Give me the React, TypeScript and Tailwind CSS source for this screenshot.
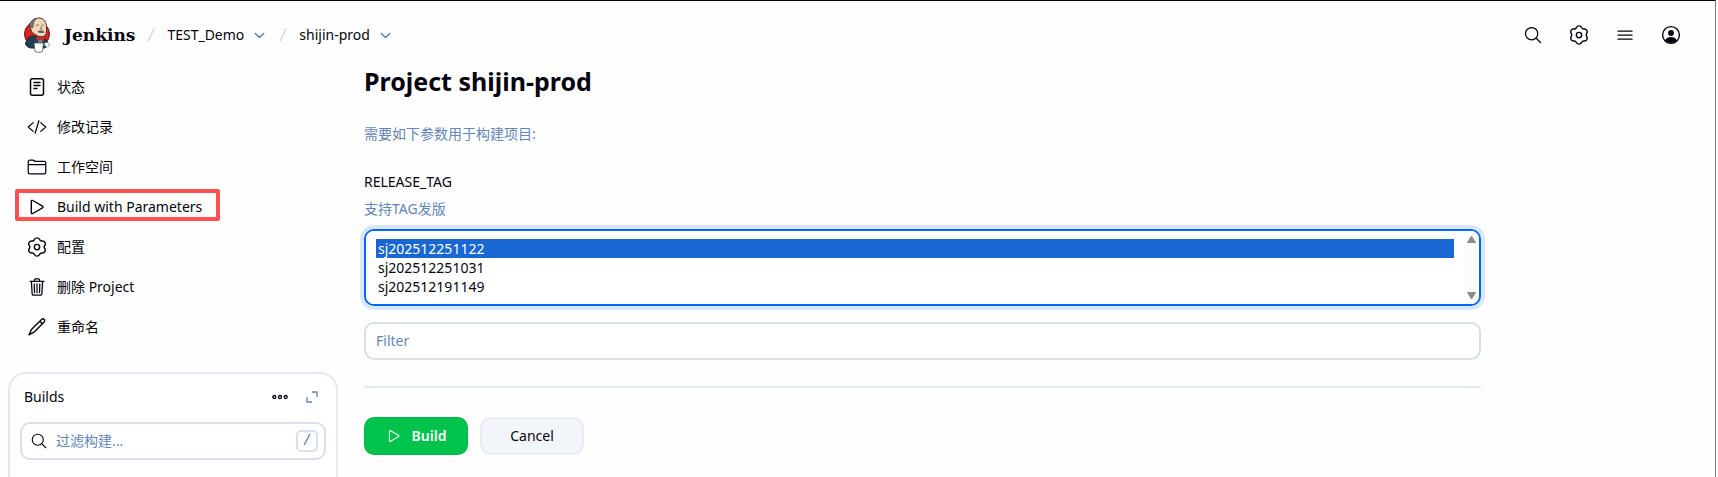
import type { ReactNode } from 'react'
import {
  IoChevronDownOutline,
  IoCodeSlashOutline,
  IoFolderOutline,
  IoSearchOutline,
  IoTrashOutline,
} from 'react-icons/io5'

interface NavItem {
  label: string
  icon: ReactNode
  marked?: boolean
}

function JenkinsLogo() {
  return (
    <svg width="26" height="36" viewBox="0 0 26 36" aria-hidden="true">
      <ellipse cx="13" cy="17" rx="12.5" ry="12.5" fill="#d8231f" stroke="#6b1c1a" />
      {/* suit */}
      <path d="M1.500 27c1-5 4-8 8-8l9 1c3 1 5 4 5.500 8l-3 3H9c-3 .5-6.500-1-7.500-4z" fill="#1f4050" stroke="#14242d" />
      {/* head */}
      <path d="M6 8c1-5 5-7 9-7 5.500 0 7.500 5 7.500 9 0 3 .5 6-1.500 8.500-2 2-6 1.500-9-.5-3-2-5-3-5-5.500-1-1.500-1-3-1-4.500z" fill="#f0d6b7" stroke="#4a3d38" />
      <path d="M5.500 8c1-4 4-6 7-6.500-2 1.500-3 3.500-3 6l-1 3.500c-2-.5-3-1.500-3-3z" fill="#77777b" stroke="#3b3b3b" strokeWidth=".6" />
      <path d="M12 8.500l2.500-.8M17.500 8l2 .3M17 9.500v3l1 .5" stroke="#4a3d38" strokeWidth=".8" fill="none" />
      <path d="M13.500 15c1-1.500 3-1.800 4-1 1.500-.5 2.500.2 3 1.500-2 .8-5 .8-7-.5z" fill="#5f5b5d" />
      {/* shirt and tie */}
      <path d="M14 21l5 .5-1 5-4-1z" fill="#6d8791" />
      <path d="M12.500 19l4 1.500 4-1.500.3 4.500-4.300-1.200-4 1.200z" fill="#e02a26" stroke="#81201d" strokeWidth=".6" />
      {/* napkin and cup */}
      <path d="M20 27c1-2 4-2 5 0s-1 3-3 3z" fill="#fff" stroke="#666" strokeWidth=".7" />
      <path d="M10 26h9.500l-1 8.500c-2 1.200-5.500 1.200-7.500 0z" fill="#fff" stroke="#555" strokeWidth=".8" />
    </svg>
  )
}

function GearIcon() {
  return (
    <svg width="20" height="20" viewBox="0 0 24 24" fill="none" stroke="currentColor" strokeWidth="1.700" strokeLinejoin="round">
      <path d="M8.900 3.100A3.400 3.400 0 0 1 15.100 3.100A3.100 3.100 0 0 0 18.160 4.870A3.400 3.400 0 0 1 21.260 10.230A3.100 3.100 0 0 0 21.260 13.770A3.400 3.400 0 0 1 18.160 19.130A3.100 3.100 0 0 0 15.100 20.900A3.400 3.400 0 0 1 8.900 20.900A3.100 3.100 0 0 0 5.840 19.130A3.400 3.400 0 0 1 2.740 13.770A3.100 3.100 0 0 0 2.740 10.230A3.400 3.400 0 0 1 5.840 4.870A3.100 3.100 0 0 0 8.900 3.100Z" />
      <circle cx="12" cy="12" r="3.200" />
    </svg>
  )
}

function StatusIcon() {
  return (
    <svg width="20" height="20" viewBox="0 0 20 20" fill="none" stroke="currentColor" strokeWidth="1.500" strokeLinecap="round">
      <rect x="3.500" y="1.700" width="13" height="16.600" rx="2" />
      <path d="M7 5.500h6M7 8.500h6M7 11.500h3" />
    </svg>
  )
}

function PlayIcon({ size = 20 }: { size?: number }) {
  return (
    <svg width={size} height={size} viewBox="0 0 20 20" fill="none" stroke="currentColor" strokeWidth="1.400" strokeLinejoin="round">
      <path d="M4.300 4.300v11.400c0 .8.8 1.200 1.500.8l9.700-5.700c.7-.4.7-1.200 0-1.600L5.800 3.500c-.7-.4-1.500 0-1.500.8z" />
    </svg>
  )
}

function PencilIcon() {
  return (
    <svg width="20" height="20" viewBox="0 0 20 20" fill="none" stroke="currentColor" strokeWidth="1.400" strokeLinejoin="round">
      <path d="M14.300 2.700c.9-.9 2.200-1 2.900-.3s.6 2-.3 2.900L7 15.200l-5 2.600 2.400-5.200z" />
      <path d="M12.800 4.300l2.800 2.700" />
    </svg>
  )
}

function UserIcon() {
  return (
    <svg width="20" height="20" viewBox="0 0 20 20" fill="none">
      <circle cx="10" cy="10" r="8.400" stroke="currentColor" strokeWidth="1.400" />
      <circle cx="10" cy="8" r="2.900" fill="currentColor" />
      <path d="M4 15.600c1-2.500 3.400-3.600 6-3.600s5 1.100 6 3.600a8.400 8.400 0 0 1-12 0z" fill="currentColor" />
    </svg>
  )
}

function MenuIcon() {
  return (
    <svg width="20" height="20" viewBox="0 0 20 20" stroke="currentColor" strokeWidth="1.300" strokeLinecap="round">
      <path d="M3 6.200h14M3 10.200h14M3 14.200h14" />
    </svg>
  )
}

const navItems: NavItem[] = [
  { label: '状态', icon: <StatusIcon /> },
  { label: '修改记录', icon: <IoCodeSlashOutline size={20} /> },
  { label: '工作空间', icon: <IoFolderOutline size={20} /> },
  { label: 'Build with Parameters', icon: <PlayIcon />, marked: true },
  { label: '配置', icon: <GearIcon /> },
  { label: '删除 Project', icon: <IoTrashOutline size={20} /> },
  { label: '重命名', icon: <PencilIcon /> },
]

const actions = [
  { label: 'Search', icon: <IoSearchOutline size={20} /> },
  { label: 'Manage Jenkins', icon: <GearIcon /> },
  { label: 'Menu', icon: <MenuIcon /> },
  { label: 'User', icon: <UserIcon /> },
]

const tags = ['sj202512251122', 'sj202512251031', 'sj202512191149']

function Crumb({ label }: { label: string }) {
  return (
    <>
      <svg width="8" height="14" viewBox="0 0 8 14" className="shrink-0" aria-hidden="true">
        <path d="M1 13.500L7 .5" stroke="#cfd9e8" strokeWidth="1.500" />
      </svg>
      <div className="flex items-center gap-2">
        <a href="#">{label}</a>
        <button type="button" aria-label={`${label} menu`} className="text-[#5580b8]">
          <IoChevronDownOutline size={15} />
        </button>
      </div>
    </>
  )
}

function Header() {
  return (
    <header className="flex h-[68px] items-center justify-between pr-[34px] pl-6">
      <nav className="flex items-center gap-3">
        <a href="#" className="flex items-center gap-3.5">
          <JenkinsLogo />
          <span className="font-['DejaVu_Serif',serif] text-[17px] font-bold">Jenkins</span>
        </a>
        <Crumb label="TEST_Demo" />
        <Crumb label="shijin-prod" />
      </nav>
      <div className="flex items-center gap-[26px]">
        {actions.map((action) => (
          <button key={action.label} type="button" aria-label={action.label}>
            {action.icon}
          </button>
        ))}
      </div>
    </header>
  )
}

function Sidebar() {
  return (
    <aside className="flex w-[330px] shrink-0 flex-col">
      <ul className="flex flex-col gap-1">
        {navItems.map((item) => (
          <li key={item.label} className="relative">
            <a href="#" className="flex h-9 items-center gap-2.5 pl-[19px]">
              {item.icon}
              {item.label}
            </a>
            {item.marked && (
              <span className="pointer-events-none absolute top-0 left-[7px] h-8 w-[205px] rounded-xs border-4 border-[#ff5151]" />
            )}
          </li>
        ))}
      </ul>

      {/* Build history */}
      <section className="mt-[27px] flex-1 rounded-t-[18px] border-2 border-b-0 border-[#e3e8f2] bg-white px-2.5">
        <div className="mb-0.5 flex h-[46px] items-center justify-between pr-2 pl-1">
          <h2>Builds</h2>
          <div className="flex items-center gap-[18px]">
            <button type="button" aria-label="More">
              <svg width="16" height="16" viewBox="0 0 16 16" fill="none" stroke="currentColor" strokeWidth="1.300">
                <circle cx="2.300" cy="8" r="1.500" />
                <circle cx="8" cy="8" r="1.500" />
                <circle cx="13.700" cy="8" r="1.500" />
              </svg>
            </button>
            <button type="button" aria-label="Expand" className="text-[#6486b8]">
              <svg width="12" height="12" viewBox="0 0 12 12" fill="none" stroke="currentColor" strokeWidth="1.300">
                <path d="M6 1h5v5M1 6v5h5" />
              </svg>
            </button>
          </div>
        </div>
        <label className="flex h-[38px] items-center gap-2 rounded-[10px] border-2 border-[#d8e0ee] px-2">
          <IoSearchOutline size={18} className="shrink-0" />
          <input
            type="text"
            aria-label="过滤构建"
            placeholder="过滤构建..."
            className="min-w-0 flex-1 bg-transparent outline-none placeholder:text-[#6486b8]"
          />
          <kbd className="-mr-0.5 flex size-[22px] items-center justify-center rounded-[5px] border-2 border-[#d8e0ee] text-[#4f719f]">
            /
          </kbd>
        </label>
      </section>
    </aside>
  )
}

function BuildForm() {
  return (
    <main className="w-full max-w-[1117px] min-w-0">
      <h1 className="text-[25px] leading-6 font-bold">Project shijin-prod</h1>
      <p className="mt-[31px] text-[#6486b8]">需要如下参数用于构建项目:</p>

      <form onSubmit={(e) => e.preventDefault()}>
        <label htmlFor="release-tag" className="mt-7 block">
          RELEASE_TAG
        </label>
        <p className="mt-[7px] text-[#6486b8]">支持TAG发版</p>

        <div className="mt-2.5 flex overflow-hidden rounded-[10px] border-2 border-[#0068f5] bg-white shadow-[0_0_0_4px_#d9e7fe]">
          <select
            id="release-tag"
            size={3}
            defaultValue={tags[0]}
            className="h-[73px] min-w-0 flex-1 appearance-none overflow-hidden bg-white px-2.5 py-2 outline-none"
          >
            {tags.map((tag) => (
              <option
                key={tag}
                value={tag}
                className="h-[19px] min-h-0 px-0.5 py-0 leading-[17px] checked:bg-[linear-gradient(#1967d2,#1967d2)] checked:[-webkit-text-fill-color:#fff]"
              >
                {tag}
              </option>
            ))}
          </select>
          {/* Scrollbar track */}
          <div className="flex w-[15px] flex-col items-center justify-between bg-[#fcfcfc] py-1" aria-hidden="true">
            <svg width="9" height="9" viewBox="0 0 9 9" fill="#8b8b8b">
              <path d="M3.700 1.500L0 7.500Q0 8 .5 8h8Q9 8 9 7.500L5.300 1.500Q4.500.5 3.700 1.500z" />
            </svg>
            <svg width="9" height="9" viewBox="0 0 9 9" fill="#8b8b8b">
              <path d="M3.700 7.500L0 1.500Q0 1 .5 1h8Q9 1 9 1.500L5.300 7.500Q4.500 8.500 3.700 7.500z" />
            </svg>
          </div>
        </div>

        <input
          type="text"
          aria-label="Filter"
          placeholder="Filter"
          className="mt-4 block h-[38px] w-full rounded-[10px] border-2 border-[#d8e0ee] bg-white px-2.5 pb-0.5 outline-none placeholder:text-[#6486b8]"
        />

        <hr className="mt-[26px] border-t-2 border-[#e3e8f2]" />

        <div className="mt-[29px] flex gap-3">
          <button
            type="submit"
            className="flex h-[38px] w-[104px] items-center justify-center gap-2.5 rounded-[10px] border-2 border-[#00bd4b] bg-[#00c34e] font-semibold text-white"
          >
            <PlayIcon size={16} />
            Build
          </button>
          <button type="button" className="h-[38px] w-[104px] rounded-[10px] border-2 border-[#e9edf2] bg-[#f2f5f9]">
            Cancel
          </button>
        </div>
      </form>
    </main>
  )
}

export default function App() {
  return (
    <div className="flex min-h-screen bg-[#fefefe] pr-0.5 font-['Noto_Sans','Noto_Sans_CJK_SC',sans-serif] text-sm text-[#05050f]">
      <div className="flex min-w-0 flex-1 flex-col border-t border-r border-t-black border-r-[#7b7b7b]">
        <Header />
        <div className="flex flex-1 gap-[26px] px-2">
          <Sidebar />
          <BuildForm />
        </div>
      </div>
    </div>
  )
}
